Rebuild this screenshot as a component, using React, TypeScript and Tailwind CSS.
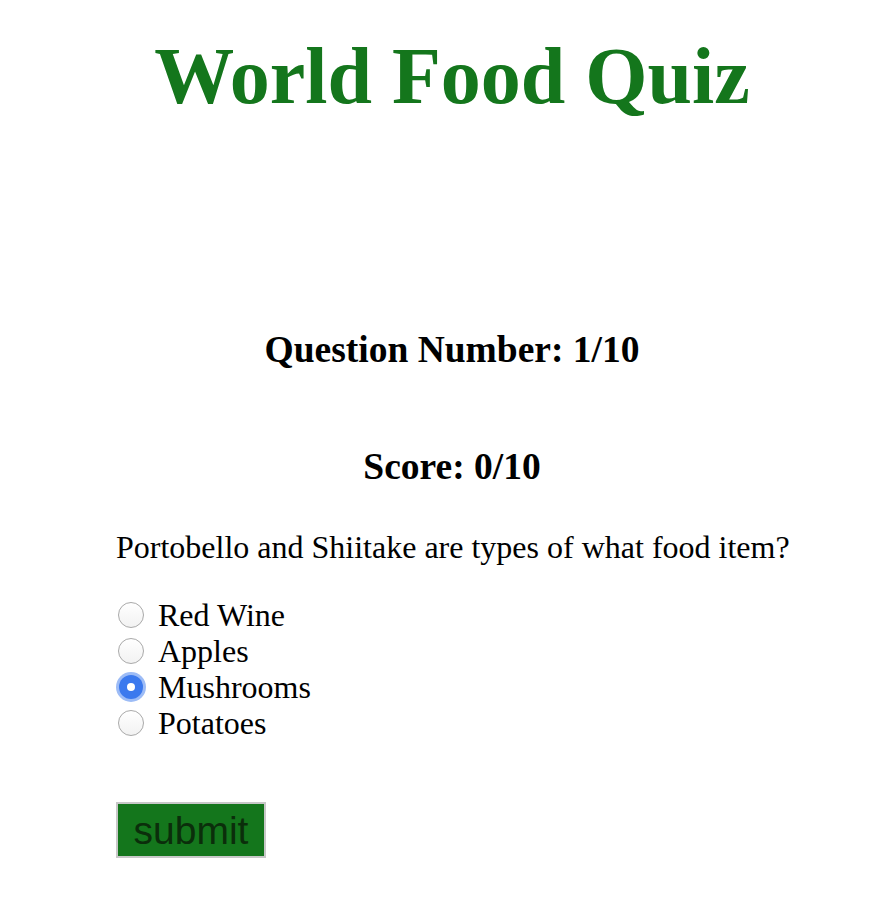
const options = ["Red Wine", "Apples", "Mushrooms", "Potatoes"];

function Radio({ checked }: { checked: boolean }) {
  if (checked) {
    return (
      <span className="flex h-[30px] w-[30px] items-center justify-center rounded-full bg-[#9dbcf6]">
        <span className="flex h-[24px] w-[24px] items-center justify-center rounded-full bg-[#3b79ee]">
          <span className="h-[8px] w-[8px] rounded-full bg-white" />
        </span>
      </span>
    );
  }
  return (
    <span className="flex h-[30px] w-[30px] items-center justify-center">
      <span className="h-[26px] w-[26px] rounded-full border border-[#a9a9a9] bg-gradient-to-b from-white to-[#f2f2f2]" />
    </span>
  );
}

export default function App() {
  return (
    <div className="min-h-[904px] bg-white text-black font-['Liberation_Serif','Times_New_Roman',serif]">
      <div className="pl-[26px] text-center">
        <h1 className="pt-[21px] text-[80px] font-bold leading-[110px] text-[#14761c]">
          World Food Quiz
        </h1>
        <h3 className="mt-[199px] text-[37.5px] font-bold leading-[40px]">Question Number: 1/10</h3>
        <h3 className="mt-[77px] text-[37.5px] font-bold leading-[40px]">Score: 0/10</h3>
      </div>

      <div className="pl-[116px]">
        <p className="mt-[42px] text-[32px] leading-[36px]">
          Portobello and Shiitake are types of what food item?
        </p>
        <div className="mt-[32px] flex flex-col">
          {options.map((opt) => (
            <label key={opt} className="flex h-[36px] items-center gap-[12px] text-[32px]">
              <Radio checked={opt === "Mushrooms"} />
              <span>{opt}</span>
            </label>
          ))}
        </div>
        <button className="mt-[61px] flex h-[56px] w-[150px] items-center justify-center border-2 border-[#c8c8c8] bg-[#14761c] font-['Liberation_Sans',Arial,sans-serif] text-[39px] leading-none text-[#0b2e0b]">
          submit
        </button>
      </div>
    </div>
  );
}
